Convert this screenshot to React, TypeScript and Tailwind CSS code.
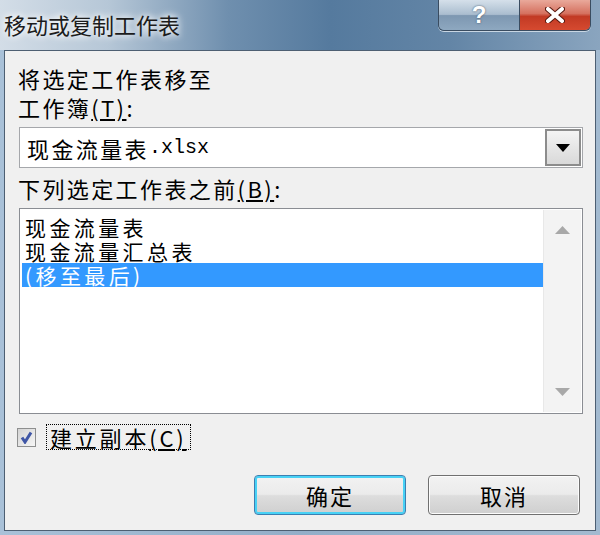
const cjk = { fontFamily: '"Noto Sans CJK SC", "Noto Sans", sans-serif' }

const App = () => {
  return (
    <div
      className="w-[600px] h-[535px] flex flex-col bg-[linear-gradient(90deg,#a9c1d8_0%,#93aec8_50%,#a3bad0_100%)] overflow-hidden"
      style={cjk}
    >
      {/* title bar */}
      <div className="h-[50px] shrink-0 flex justify-between bg-[linear-gradient(90deg,#d3dde7_0%,#b6c7d7_18%,#6f8fae_38%,#557a9e_55%,#6385a6_75%,#8aa5bf_100%)]">
        <div className="pl-[4px] pt-[10px] text-[22px] leading-[28px] text-[#1c1c1c] [text-shadow:0_0_6px_#ffffff,0_0_10px_#ffffff]">
          移动或复制工作表
        </div>
        <div className="flex h-[31px] mr-[9px] border border-t-0 border-[#3a4c60] rounded-b-[6px] overflow-hidden shadow-[0_1px_0_#c8d6e3]">
          <div className="w-[81px] flex items-center justify-center border-r border-[#3a4c60] bg-[linear-gradient(180deg,#d5e0ea_0%,#aabdcf_48%,#7d97b1_52%,#8ea8c0_100%)]">
            <span className="text-white font-bold text-[24px] leading-none [text-shadow:0_0_2px_#34495e]" style={{ fontFamily: '"Liberation Sans", sans-serif' }}>?</span>
          </div>
          <div className="w-[70px] flex items-center justify-center bg-[linear-gradient(180deg,#e9a99b_0%,#d5715f_45%,#c23a24_55%,#d64a30_100%)]">
            <svg width="20" height="16" viewBox="0 0 20 16">
              <path d="M3 2 L17 14 M17 2 L3 14" stroke="#5a1a10" strokeWidth="6" strokeLinecap="round" />
              <path d="M3 2 L17 14 M17 2 L3 14" stroke="#ffffff" strokeWidth="4" strokeLinecap="round" />
            </svg>
          </div>
        </div>
      </div>

      {/* client area */}
      <div className="mx-[4px] h-[481px] shrink-0 border border-[#4d5f72] bg-[#f0f0f0] pl-[14px] pr-[12px] pt-[13px] text-[22px] text-black">
        <div className="leading-[29px] -ml-px tracking-[2.4px]">将选定工作表移至</div>
        <div className="leading-[29px] -ml-px tracking-[2.4px]">
          工作簿<span className="underline">(T)</span>:
        </div>

        {/* combobox */}
        <div className="mt-[5px] h-[41px] flex border border-[#a5a7ab] bg-white">
          <div className="flex-1 flex items-center pl-[7px] leading-none">
            <span className="tracking-[2.4px]">现金流量表</span>
            <span className="text-[20px]" style={{ fontFamily: '"Liberation Mono", monospace' }}>.xlsx</span>
          </div>
          <div className="w-[36px] m-px flex items-center justify-center border-2 border-[#8c8c8c] bg-[linear-gradient(180deg,#f4f4f4_0%,#e6e6e6_50%,#d9d9d9_100%)]">
            <svg width="14" height="8" viewBox="0 0 14 8">
              <path d="M0 0 H14 L7 8 Z" fill="#000" />
            </svg>
          </div>
        </div>

        <div className="mt-[6px] leading-[29px] -ml-px tracking-[2.4px]">
          下列选定工作表之前<span className="underline">(B)</span>:
        </div>

        {/* list box */}
        <div className="mt-[5px] h-[206px] flex border border-[#8a8d93] bg-white p-[2px]">
          <div className="flex-1 pt-[4px] text-[21px] leading-[24px]">
            <div className="pl-[3px] tracking-[3.4px]">现金流量表</div>
            <div className="pl-[3px] tracking-[3.4px]">现金流量汇总表</div>
            <div className="pl-[3px] bg-[#3399ff] text-white tracking-[3.4px]">(移至最后)</div>
          </div>
          <div className="w-[38px] -my-px -mr-px flex flex-col justify-between items-center py-[16px] bg-[#f3f3f3] border-l border-[#e8e8e8]">
            <svg width="15" height="8" viewBox="0 0 15 8">
              <path d="M0 8 L7.5 0 L15 8 Z" fill="#a8a8a8" />
            </svg>
            <svg width="15" height="8" viewBox="0 0 15 8">
              <path d="M0 0 H15 L7.5 8 Z" fill="#a8a8a8" />
            </svg>
          </div>
        </div>

        {/* checkbox */}
        <div className="mt-[10px] h-[26px] flex items-center gap-[10px] -ml-[2px]">
          <div className="w-[19px] h-[19px] border border-[#8e8f8f] bg-[linear-gradient(135deg,#d4d4d4_0%,#f6f6f6_100%)] flex items-center justify-center">
            <svg width="13" height="13" viewBox="0 0 13 13">
              <path d="M2 6.5 L5 11 L11 1.5" stroke="#3f56a6" strokeWidth="3" fill="none" />
            </svg>
          </div>
          <div className="h-[26px] px-[3px] flex items-center border border-dotted border-black tracking-[2.8px] leading-none">
            建立副本<span className="underline">(C)</span>
          </div>
        </div>

        {/* buttons */}
        <div className="mt-[25px] flex justify-end gap-[22px] pr-[3px]">
          <button className="w-[152px] h-[40px] rounded-[4px] border border-[#3c7fb1] shadow-[inset_0_0_0_2px_#48d1f5] bg-[linear-gradient(180deg,#f2f2f2_0%,#ebebeb_48%,#dddddd_52%,#cfcfcf_100%)] text-[22px] tracking-[2px]">
            确定
          </button>
          <button className="w-[152px] h-[40px] rounded-[4px] border border-[#707070] shadow-[inset_0_0_0_1px_#fcfcfc] bg-[linear-gradient(180deg,#f2f2f2_0%,#ebebeb_48%,#dddddd_52%,#cfcfcf_100%)] text-[22px] tracking-[2px]">
            取消
          </button>
        </div>
      </div>
    </div>
  )
}

export default App
